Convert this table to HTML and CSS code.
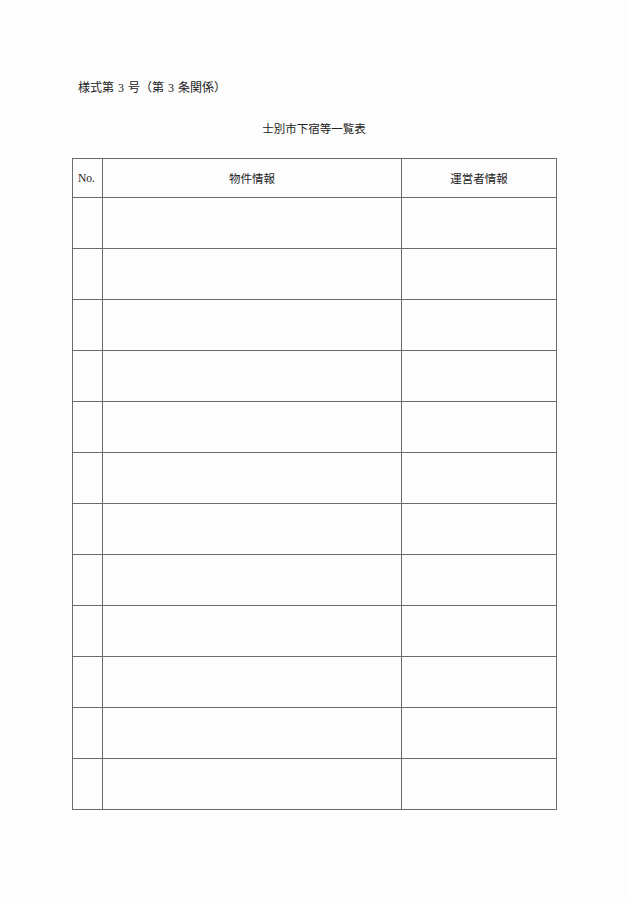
FILE: index.html
```html
<!DOCTYPE html>
<html lang="ja">
<head>
<meta charset="utf-8">
<link rel="stylesheet" href="styles.css">
<title>士別市下宿等一覧表</title>
</head>
<body>
<div class="page">
  <p class="form-no">様式第 3 号（第 3 条関係）</p>
  <h1 class="title">士別市下宿等一覧表</h1>
  <table class="list">
    <colgroup>
      <col class="c-no">
      <col class="c-prop">
      <col class="c-op">
    </colgroup>
    <thead>
      <tr><th class="h-no">No.</th><th>物件情報</th><th>運営者情報</th></tr>
    </thead>
    <tbody>
      <tr><td></td><td></td><td></td></tr>
      <tr><td></td><td></td><td></td></tr>
      <tr><td></td><td></td><td></td></tr>
      <tr><td></td><td></td><td></td></tr>
      <tr><td></td><td></td><td></td></tr>
      <tr><td></td><td></td><td></td></tr>
      <tr><td></td><td></td><td></td></tr>
      <tr><td></td><td></td><td></td></tr>
      <tr><td></td><td></td><td></td></tr>
      <tr><td></td><td></td><td></td></tr>
      <tr><td></td><td></td><td></td></tr>
      <tr><td></td><td></td><td></td></tr>
    </tbody>
  </table>
</div>
</body>
</html>
```
FILE: styles.css
```css
html, body {
  margin: 0;
  padding: 0;
  background: #fdfdfd;
}
body {
  font-family: "Liberation Serif", "Noto Sans CJK JP", serif;
  color: #222;
}
.page {
  padding: 80px 0 0 72px;
  width: 484px;
}
.form-no {
  margin: 0 0 0 6px;
  font-size: 12px;
  line-height: 16px;
  word-spacing: 1px;
}
.title {
  margin: 25px 0 0 0;
  font-size: 11.5px;
  font-weight: normal;
  text-align: center;
  line-height: 16px;
}
.list {
  margin-top: 21px;
  width: 484px;
  border-collapse: collapse;
  table-layout: fixed;
}
.c-no { width: 30px; }
.c-prop { width: 299px; }
.c-op { width: 155px; }
.list th, .list td {
  border: 1px solid #6b6b6b;
  padding: 0;
}
.list th {
  height: 38px;
  font-weight: normal;
  font-size: 11.5px;
  text-align: center;
}
.list th.h-no {
  text-align: left;
  padding-left: 5px;
}
.list td {
  height: 50px;
}
```
